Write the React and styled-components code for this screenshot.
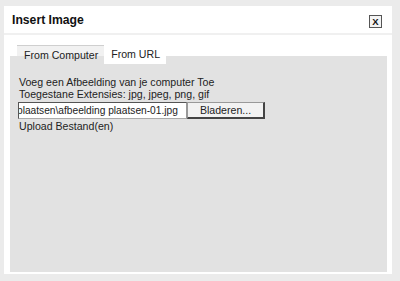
import styled, { createGlobalStyle } from "styled-components";

const GlobalStyle = createGlobalStyle`
  html, body {
    margin: 0;
    padding: 0;
    background: #ebebeb;
  }
  body {
    font-family: "Liberation Sans", Arial, sans-serif;
    color: #222;
  }
`;

const Page = styled.div`
  width: 400px;
  height: 281px;
  padding: 6px 8px 7px 4px;
  box-sizing: border-box;
`;

const Dialog = styled.div`
  background: #fff;
  height: 100%;
  display: flex;
  flex-direction: column;
  box-sizing: border-box;
  padding: 0 5px 2px 6px;
`;

const Header = styled.div`
  height: 27px;
  display: flex;
  align-items: center;
  justify-content: space-between;
  border-bottom: 2px solid #f0f0f0;
  margin: 0 -5px 0 -6px;
  padding: 0 10px 0 8px;
`;

const Title = styled.div`
  font-size: 12.2px;
  font-weight: bold;
  color: #111;
  padding-top: 1px;
`;

const Close = styled.div`
  width: 11px;
  height: 11px;
  border: 1px solid #555;
  background: #f4f4f4;
  font-size: 9.5px;
  font-weight: bold;
  line-height: 11px;
  text-align: center;
  color: #111;
  margin-top: 3px;
`;

const TabBar = styled.div`
  margin-top: 10px;
  display: flex;
  padding-left: 7px;
  height: 19px;
  border-radius: 3px 3px 0 0;
  background: linear-gradient(to bottom, transparent 11px, #e2e2e2 11px);
`;

const Tab = styled.div`
  font-size: 10.6px;
  padding: 0 6px 0 7px;
  color: #222;
  box-sizing: border-box;
  border-top: ${(p) => (p.active ? "1px solid #cfcfcf" : "none")};
  line-height: ${(p) => (p.active ? "18px" : "19px")};
  background: ${(p) =>
    p.active
      ? "linear-gradient(to bottom, #f1f1f1 10px, #e2e2e2 10px)"
      : "#fff"};
`;

const Panel = styled.div`
  flex: 1;
  background: #e2e2e2;
  padding: 12px 9px;
  font-size: 10.6px;
  line-height: 12px;
  color: #222;
`;

const FileRow = styled.div`
  display: flex;
  height: 17px;
  margin: 2px 0 1px -1px;
`;

const FileText = styled.div`
  width: 169px;
  box-sizing: border-box;
  background: #fff;
  border: 1px solid #555;
  border-right-color: #999;
  border-bottom-color: #aaa;
  overflow: hidden;
  white-space: nowrap;
  font-size: 10.2px;
  line-height: 15px;
  text-indent: -2px;
`;

const Browse = styled.div`
  width: 78px;
  box-sizing: border-box;
  background: #f2f2f2;
  border: 1px solid #999;
  border-right: 2px solid #444;
  border-bottom: 2px solid #444;
  text-align: center;
  line-height: 14px;
`;

export default function App() {
  return (
    <>
      <GlobalStyle />
      <Page>
        <Dialog>
          <Header>
            <Title>Insert Image</Title>
            <Close>X</Close>
          </Header>
          <TabBar>
            <Tab active>From Computer</Tab>
            <Tab>From URL</Tab>
          </TabBar>
          <Panel>
            <div>Voeg een Afbeelding van je computer Toe</div>
            <div>Toegestane Extensies: jpg, jpeg, png, gif</div>
            <FileRow>
              <FileText>plaatsen\afbeelding plaatsen-01.jpg</FileText>
              <Browse>Bladeren...</Browse>
            </FileRow>
            <div>Upload Bestand(en)</div>
          </Panel>
        </Dialog>
      </Page>
    </>
  );
}
